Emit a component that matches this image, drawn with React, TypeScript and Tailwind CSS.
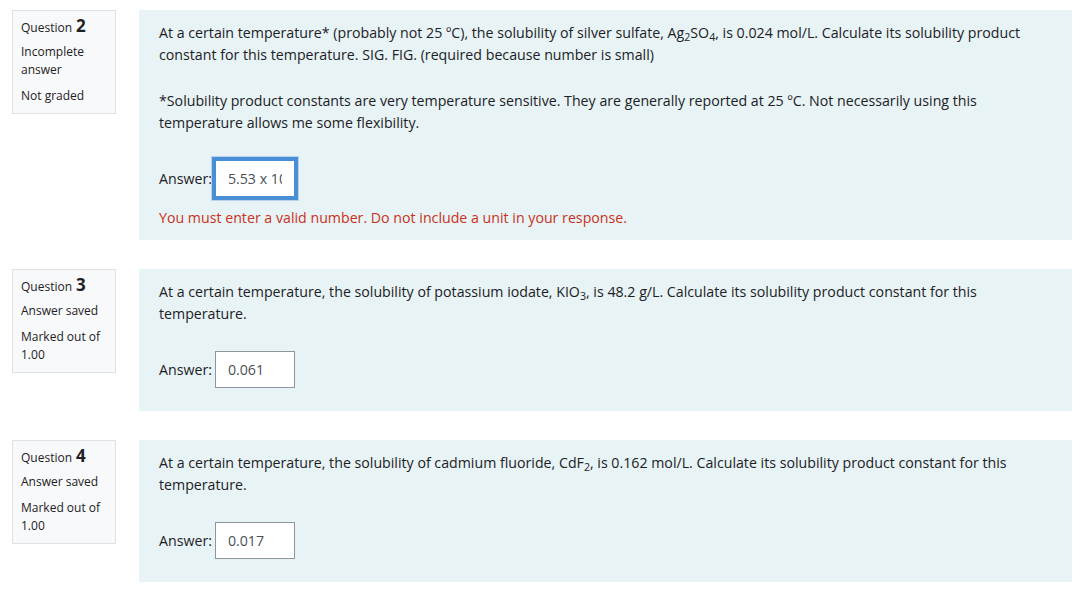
import React from 'react';

interface Question {
  num: number;
  status: string[];
  grade: string[];
  paragraphs: React.ReactNode[];
  answer: string;
  focused?: boolean;
  error?: string;
}

const questions: Question[] = [
  {
    num: 2,
    status: ['Incomplete', 'answer'],
    grade: ['Not graded'],
    paragraphs: [
      <>
        At a certain temperature* (probably not 25 ºC), the solubility of silver sulfate, Ag<sub>2</sub>SO<sub>4</sub>, is 0.024 mol/L. Calculate its solubility product
        <br />
        constant for this temperature. SIG. FIG. (required because number is small)
      </>,
      <>
        *Solubility product constants are very temperature sensitive. They are generally reported at 25 ºC. Not necessarily using this
        <br />
        temperature allows me some flexibility.
      </>,
    ],
    answer: '5.53 x 10^-5',
    focused: true,
    error: 'You must enter a valid number. Do not include a unit in your response.',
  },
  {
    num: 3,
    status: ['Answer saved'],
    grade: ['Marked out of', '1.00'],
    paragraphs: [
      <>
        At a certain temperature, the solubility of potassium iodate, KIO<sub>3</sub>, is 48.2 g/L. Calculate its solubility product constant for this
        <br />
        temperature.
      </>,
    ],
    answer: '0.061',
  },
  {
    num: 4,
    status: ['Answer saved'],
    grade: ['Marked out of', '1.00'],
    paragraphs: [
      <>
        At a certain temperature, the solubility of cadmium fluoride, CdF<sub>2</sub>, is 0.162 mol/L. Calculate its solubility product constant for this
        <br />
        temperature.
      </>,
    ],
    answer: '0.017',
  },
];

const QuestionBlock: React.FC<{ q: Question }> = ({ q }) => {
  return (
    <div className="flex items-start gap-[23px] mb-[29px]">
      <div className="w-[104px] shrink-0 bg-[#f8f9fa] border border-[#dee2e6] px-2 pt-[6px] pb-2 text-[12px] leading-[18px] text-[#1d2125]">
        <div className="h-[22px] flex items-end pb-[2px]">
          <span>Question</span>
          <span className="ml-1 text-[17px] font-bold leading-[22px]">{q.num}</span>
        </div>
        <div className="mt-1">
          {q.status.map((s) => (
            <div key={s}>{s}</div>
          ))}
        </div>
        <div className="mt-2">
          {q.grade.map((s) => (
            <div key={s}>{s}</div>
          ))}
        </div>
      </div>

      <div className="w-[933px] bg-[#e7f3f5] px-5 pt-3 pb-[11px] text-[14.2px] leading-[22px] text-[#1d2125]">
        {q.paragraphs.map((p, i) => (
          <p key={i} className={`whitespace-nowrap ${i > 0 ? 'mt-6' : ''}`}>
            {p}
          </p>
        ))}
        <div className="flex items-center mt-[26px]">
          <span>Answer:</span>
          <input
            readOnly
            value={q.answer}
            className={`ml-[3px] w-20 h-[37px] pl-3 pr-3 bg-white text-[14.2px] text-[#495057] outline-none border ${
              q.focused
                ? 'border-[#4a8ed6] shadow-[0_0_0_3px_#4a8ed6,0_0_0_4px_#b9d3ee]'
                : 'border-[#8f959e]'
            }`}
          />
        </div>
        {q.error ? (
          <div className="mt-[10px] text-[#ca3120]">{q.error}</div>
        ) : (
          <div className="h-3" />
        )}
      </div>
    </div>
  );
};

export default function App() {
  return (
    <div className="min-h-screen bg-white pl-3 pt-[10px] font-['Open_Sans','Noto_Sans',sans-serif]">
      {questions.map((q) => (
        <QuestionBlock key={q.num} q={q} />
      ))}
    </div>
  );
}
